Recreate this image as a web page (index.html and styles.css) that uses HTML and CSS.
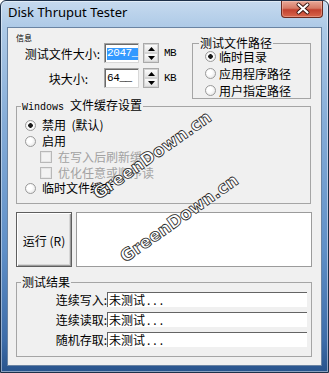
FILE: index.html
```html
<!DOCTYPE html>
<html lang="zh">
<head>
    <meta charset="UTF-8">
    <title>Disk Thruput Tester</title>
    <link rel="stylesheet" href="styles.css">
</head>
<body>
    <div class="window">
        <div class="titlebar">
            <div class="title">Disk Thruput Tester</div>
            <div class="close">
                <svg width="42" height="17" viewBox="0 0 42 17">
                    <path d="M16.5 4.5 L25.5 12.5 M25.5 4.5 L16.5 12.5" stroke="#3a1410" stroke-width="4" stroke-linecap="round"/>
                    <path d="M16.5 4.5 L25.5 12.5 M25.5 4.5 L16.5 12.5" stroke="#fff" stroke-width="2.2" stroke-linecap="round"/>
                </svg>
            </div>
        </div>

        <div class="client">
            <div class="top">
                <div class="info">
                    <div class="tiny">信息</div>
                    <div class="field-row">
                        <div class="lbl">测试文件大小:</div>
                        <div class="edit"><span class="hl">2047_</span><span class="caret"></span></div>
                        <div class="spin">
                            <span><svg width="7" height="4"><path d="M0 4 L3.5 0 L7 4Z" fill="#000"/></svg></span>
                            <span><svg width="7" height="4"><path d="M0 0 L3.5 4 L7 0Z" fill="#000"/></svg></span>
                        </div>
                        <div class="unit">MB</div>
                    </div>
                    <div class="field-row second">
                        <div class="lbl">块大小:</div>
                        <div class="edit"><span>64__</span></div>
                        <div class="spin">
                            <span><svg width="7" height="4"><path d="M0 4 L3.5 0 L7 4Z" fill="#000"/></svg></span>
                            <span><svg width="7" height="4"><path d="M0 0 L3.5 4 L7 0Z" fill="#000"/></svg></span>
                        </div>
                        <div class="unit">KB</div>
                    </div>
                </div>

                <fieldset class="group path">
                    <legend>测试文件路径</legend>
                    <div class="opts">
                        <div class="opt"><span class="radio on"></span>临时目录</div>
                        <div class="opt"><span class="radio"></span>应用程序路径</div>
                        <div class="opt"><span class="radio"></span>用户指定路径</div>
                    </div>
                </fieldset>
            </div>

            <fieldset class="group cache">
                <legend><span class="mono">Windows </span>文件缓存设置</legend>
                <div class="opts">
                    <div class="opt"><span class="radio on"></span>禁用&nbsp;&nbsp;(默认)</div>
                    <div class="opt"><span class="radio"></span>启用</div>
                    <div class="opt sub"><span class="check"></span>在写入后刷新缓存</div>
                    <div class="opt sub"><span class="check"></span>优化任意或顺序读</div>
                    <div class="opt last"><span class="radio"></span>临时文件缓存</div>
                </div>
            </fieldset>

            <div class="run-row">
                <div class="run-btn">运行 (R)</div>
                <div class="output"></div>
            </div>

            <fieldset class="group results">
                <legend>测试结果</legend>
                <div class="rows">
                    <div class="res"><div class="res-lbl">连续写入:</div><div class="res-val">未测试<span class="dots">...</span></div></div>
                    <div class="res"><div class="res-lbl">连续读取:</div><div class="res-val">未测试<span class="dots">...</span></div></div>
                    <div class="res"><div class="res-lbl">随机存取:</div><div class="res-val">未测试<span class="dots">...</span></div></div>
                </div>
            </fieldset>
        </div>

        <!-- watermark over the dialog -->
        <div class="wm wm1">GreenDown.cn</div>
        <div class="wm wm2">GreenDown.cn</div>
    </div>
</body>
</html>
```

FILE: styles.css
```css
body {
    margin: 0;
    background-color: #ffffff;
    font-family: "Noto Sans CJK SC", "Noto Sans", sans-serif;
    font-size: 12px;
    color: #000;
}

.window {
    position: relative;
    width: 329px;
    height: 373px;
    box-sizing: border-box;
    border: 1px solid #1d3049;
    border-radius: 6px 6px 0 0;
    padding: 0 6px 6px;
    overflow: hidden;
    background: linear-gradient(to bottom, #c6daef 0px, #aecae7 26px, #86add8 120px, #5f8fc7 250px, #3d6ca8 340px, #27528a 373px);
    box-shadow: inset 0 0 0 1px rgba(255, 255, 255, 0.45);
}

.titlebar {
    height: 26px;
    display: flex;
}

.title {
    margin: 3px 0 0 1px;
    font-family: "Noto Sans", sans-serif;
    font-size: 13px;
    line-height: 17px;
}

.close {
    position: absolute;
    top: 0;
    right: 5px;
    width: 42px;
    height: 17px;
    box-sizing: border-box;
    border: 1px solid #6b2a20;
    border-top: none;
    border-radius: 0 0 4px 4px;
    background: linear-gradient(to bottom, #e9a898 0%, #d67a66 45%, #c2412f 55%, #d8664c 100%);
    box-shadow: inset 0 0 0 1px rgba(255, 220, 210, 0.35);
}

.close svg {
    display: block;
    margin-top: -1px;
}

.client {
    width: 315px;
    height: 339px;
    box-sizing: border-box;
    border: 1px solid #6a84a3;
    background-color: #f0f0f0;
}

/* top area */
.top {
    display: flex;
    height: 71px;
}

.info {
    width: 184px;
    padding-top: 5px;
    box-sizing: border-box;
}

.tiny {
    font-size: 8px;
    line-height: 9px;
    margin-left: 8px;
}

.field-row {
    display: flex;
    align-items: center;
    height: 20px;
    margin-top: 1px;
}

.field-row.second {
    margin-top: 5px;
}

.lbl {
    width: 96px;
    box-sizing: border-box;
    padding-right: 4px;
    text-align: right;
    white-space: nowrap;
}

.second .lbl {
    padding-right: 16px;
}

.edit {
    width: 35px;
    height: 20px;
    box-sizing: border-box;
    border: 1px solid #a3a3a3;
    border-right-color: #d8d8d8;
    border-bottom-color: #d8d8d8;
    box-shadow: inset 1px 1px 0 #6a6a6a;
    background-color: #fff;
    padding: 4px 0 0 2px;
    display: flex;
    align-items: flex-start;
    font-family: "Liberation Mono", monospace;
    font-size: 11px;
    line-height: 11px;
    letter-spacing: -0.4px;
}

.hl {
    background-color: #3399ff;
    color: #fff;
    padding-bottom: 1px;
}

.caret {
    width: 3px;
    height: 12px;
    background-color: #e07b1e;
}

.spin {
    margin-left: 4px;
    width: 16px;
    height: 20px;
    box-sizing: border-box;
    border: 1px solid #a9a9a9;
    display: flex;
    flex-direction: column;
    background-color: #fff;
}

.spin span {
    flex: 1;
    display: flex;
    align-items: center;
    justify-content: center;
    border: 1px solid #d4d4d4;
    background: linear-gradient(to bottom, #fbfbfb, #e3e3e3);
}

.spin svg {
    display: block;
}

.unit {
    margin-left: 5px;
    font-family: "Liberation Mono", monospace;
    font-size: 11px;
    letter-spacing: -0.5px;
}

/* group boxes */
.group {
    margin: 0;
    padding: 0;
    min-width: 0;
    box-sizing: border-box;
    border: 1px solid #a5a5a5;
}

.group legend {
    padding: 0 1px;
    margin-left: 4px;
    line-height: 12px;
    font-size: 12px;
    white-space: nowrap;
}

.path {
    margin-top: 9px;
    width: 119px;
    height: 62px;
}

.path legend {
    margin-left: 6px;
}

.path .opts {
    margin-top: -1px;
}

.path .opt {
    height: 17px;
    line-height: 17px;
    padding-left: 12px;
    gap: 3px;
}

.opt {
    display: flex;
    align-items: center;
    white-space: nowrap;
}

.radio {
    width: 11px;
    height: 11px;
    flex: none;
    box-sizing: border-box;
    border-radius: 50%;
    border: 1px solid #9a9a9a;
    background: radial-gradient(circle at 40% 40%, #ffffff 30%, #dedede 100%);
}

.radio.on {
    background: radial-gradient(circle at 50% 50%, #1b1b1b 0, #1b1b1b 2px, #ffffff 2.6px, #e4e4e4 100%);
}

.check {
    width: 12px;
    height: 12px;
    flex: none;
    box-sizing: border-box;
    border: 1px solid #b8b8b8;
    background-color: #f3f3f3;
    box-shadow: inset 0 0 0 1px #e6e6e6;
}

.cache {
    margin-left: 8px;
    width: 295px;
    height: 105px;
}

.cache .opts {
    margin-top: 3px;
}

.cache .opt {
    height: 16px;
    line-height: 16px;
    padding-left: 8px;
    gap: 6px;
}

.cache .opt.sub {
    padding-left: 23px;
    color: #a2a2a2;
}

.cache .opt.last {
    margin-top: -1px;
}

.mono {
    font-family: "Liberation Mono", monospace;
    font-size: 10px;
}

/* run row */
.run-row {
    display: flex;
    gap: 4px;
    margin: 8px 0 0 8px;
    height: 55px;
}

.run-btn {
    width: 56px;
    box-sizing: border-box;
    border: 1px solid #5e5e5e;
    background-color: #efefef;
    box-shadow: inset 1px 1px 0 #ffffff, inset -1px -1px 0 #9c9c9c, inset -2px -2px 0 #d6d6d6;
    display: flex;
    align-items: center;
    justify-content: center;
    padding-top: 2px;
    white-space: nowrap;
}

.output {
    width: 236px;
    box-sizing: border-box;
    border: 1px solid #9b9b9b;
    background-color: #fff;
}

/* results */
.results {
    margin: 9px 0 0 8px;
    width: 296px;
    height: 81px;
}

.rows {
    margin-top: 4px;
    display: flex;
    flex-direction: column;
    gap: 5px;
}

.res {
    display: flex;
    height: 15px;
}

.res-lbl {
    width: 90px;
    text-align: right;
    line-height: 15px;
    white-space: nowrap;
}

.res-val {
    width: 200px;
    box-sizing: border-box;
    border-top: 1px solid #646464;
    border-left: 1px solid #646464;
    background-color: #fff;
    padding-left: 1px;
    line-height: 14px;
    white-space: nowrap;
}

.dots {
    letter-spacing: 3px;
    margin-left: 2px;
}

/* watermark */
.wm {
    position: absolute;
    width: 170px;
    height: 24px;
    line-height: 24px;
    text-align: center;
    font-family: "DejaVu Sans", sans-serif;
    font-weight: bold;
    font-size: 17px;
    color: #ffffff;
    -webkit-text-stroke: 0.8px #1e1e1e;
    transform: rotate(-35deg);
    white-space: nowrap;
    pointer-events: none;
}

.wm1 {
    left: 66px;
    top: 142px;
}

.wm2 {
    left: 93px;
    top: 205px;
}
```
